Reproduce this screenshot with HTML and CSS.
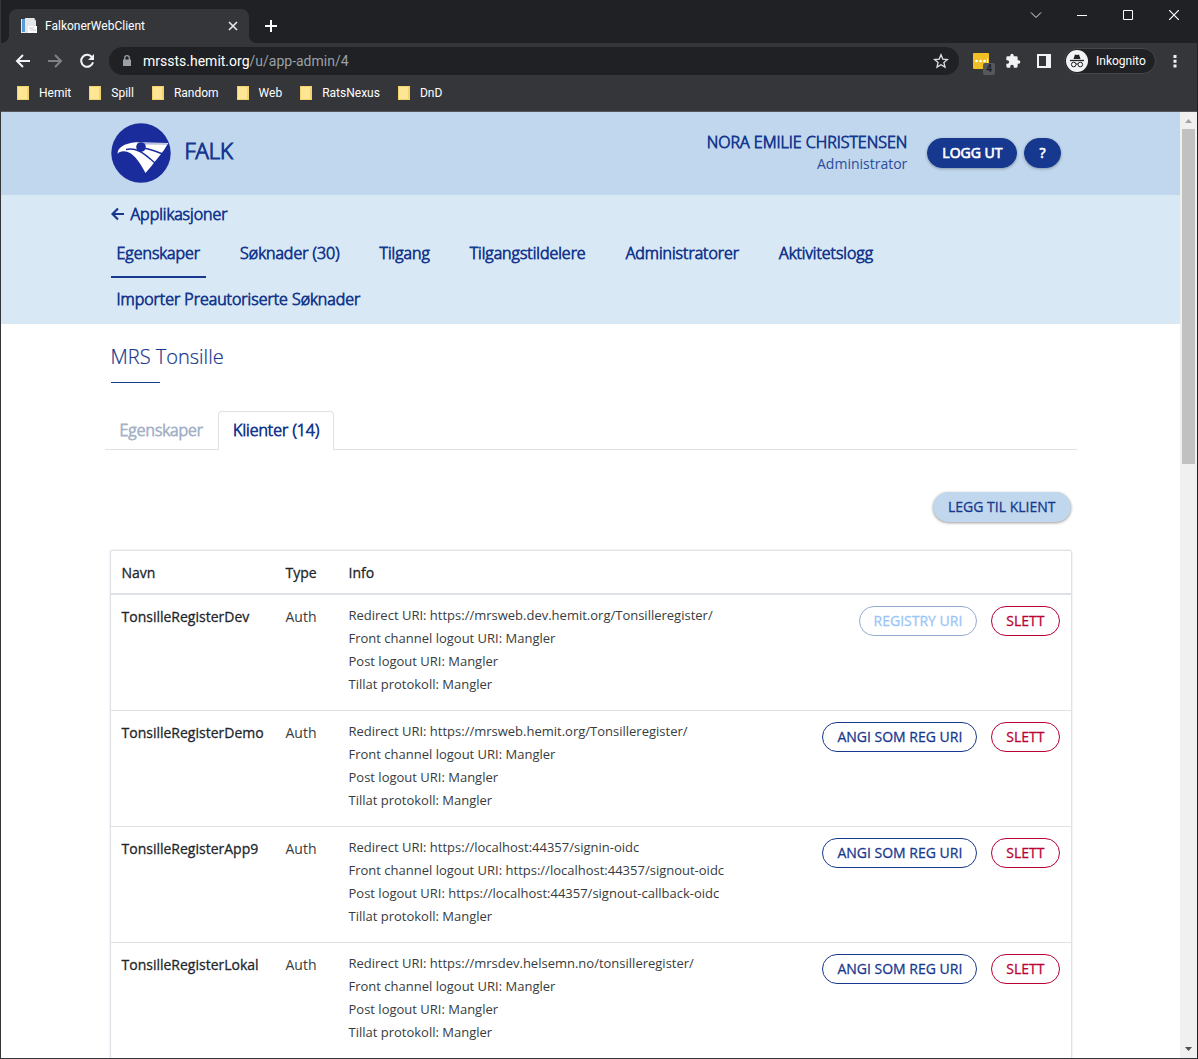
FILE: index.html
```html
<!DOCTYPE html>
<html lang="no">
<head>
<meta charset="utf-8">
<meta name="viewport" content="width=device-width, initial-scale=1">
<title>FalkonerWebClient</title>
<link rel="stylesheet" href="styles.css">
</head>
<body>
<div class="window">
  <div class="tabstrip">
    <div class="browser-tab">
      <svg class="favicon" width="16" height="16" viewBox="0 0 16 16"><path d="M0 1h10v14H0z" fill="#e8eaed"/><path d="M1 1h3v13H1z" fill="#5b9bd5"/><path d="M4 0h9l2 3v12H4z" fill="#e3e7ec"/><path d="M7 8h9v7H7z" fill="#fff"/><path d="M8 10h5M9 12h6" stroke="#c4c8cf"/><path d="M13 0v3h2" fill="#c5cdd8"/></svg>
      <span class="browser-tab-title">FalkonerWebClient</span>
      <button class="icon-button tab-close" aria-label="Lukk fane"><svg width="10" height="10" viewBox="0 0 10 10"><path d="M1 1l8 8M9 1L1 9" stroke="#e8eaed" stroke-width="1.6"/></svg></button>
    </div>
    <button class="icon-button new-tab" aria-label="Ny fane"><svg width="12" height="12" viewBox="0 0 12 12"><path d="M6 0v12M0 6h12" stroke="#fff" stroke-width="2"/></svg></button>
    <div class="window-buttons">
      <button class="icon-button" aria-label="Søk i faner"><svg width="12" height="12" viewBox="0 0 12 12"><path d="M1 3.500l5 5 5-5" fill="none" stroke="#e8eaed"/></svg></button>
      <button class="icon-button" aria-label="Minimer"><svg width="10" height="12" viewBox="0 0 10 12"><path d="M0 6.500h10" stroke="#fff"/></svg></button>
      <button class="icon-button" aria-label="Maksimer"><svg width="10" height="10" viewBox="0 0 10 10"><path d="M.5.5h9v9h-9z" fill="none" stroke="#fff"/></svg></button>
      <button class="icon-button" aria-label="Lukk"><svg width="10" height="10" viewBox="0 0 10 10"><path d="M0 0l10 10M10 0L0 10" stroke="#fff" stroke-width="1.2"/></svg></button>
    </div>
  </div>

  <div class="toolbar">
    <div class="nav-buttons">
      <button class="icon-button" aria-label="Tilbake"><svg width="16" height="16" viewBox="0 0 16 16"><path d="M15 8H2M8 2L2 8l6 6" fill="none" stroke="#f1f3f4" stroke-width="2"/></svg></button>
      <button class="icon-button" aria-label="Frem"><svg width="16" height="16" viewBox="0 0 16 16"><path d="M1 8h13M8 2l6 6-6 6" fill="none" stroke="#7e8185" stroke-width="2"/></svg></button>
      <button class="icon-button" aria-label="Last inn på nytt"><svg width="16" height="16" viewBox="0 0 16 16"><path d="M13.200 4.500A6 6 0 1 0 14 9.200" fill="none" stroke="#f1f3f4" stroke-width="2"/><path d="M15 1v6H9z" fill="#f1f3f4"/></svg></button>
    </div>
    <div class="omnibox">
      <svg width="8" height="12" viewBox="0 0 8 12"><path d="M0 4.500h8V11H0z" fill="#9aa0a6"/><path d="M1.700 5V3a2.300 2.300 0 0 1 4.600 0v2" fill="none" stroke="#9aa0a6" stroke-width="1.300"/></svg>
      <div class="url"><span class="url-host">mrssts.hemit.org</span>/u/app-admin/4</div>
      <button class="icon-button" aria-label="Legg til bokmerke"><svg width="16" height="16" viewBox="0 0 16 16"><path d="M8 1.800l1.800 4.300 4.700.4-3.600 3 1.100 4.600L8 11.700l-4 2.400 1.100-4.600-3.600-3 4.700-.4z" fill="none" stroke="#dfe1e5" stroke-width="1.300"/></svg></button>
    </div>
    <div class="extensions">
      <button class="icon-button extension" aria-label="Utvidelse"><svg width="22" height="22" viewBox="0 0 22 22"><rect width="16" height="16" rx="1" fill="#f0c024"/><circle cx="3.500" cy="8" r="1.300" fill="#fff"/><circle cx="7.500" cy="8" r="1.300" fill="#fff"/><circle cx="11.500" cy="8" r="1.300" fill="#fff"/><path d="M14.500 5.500v5" stroke="#fff"/></svg><span class="extension-badge">4</span></button>
      <button class="icon-button" aria-label="Utvidelser"><svg width="16" height="16" viewBox="0 0 24 24"><path d="M20.500 11H19V7a2 2 0 0 0-2-2h-4V3.500a2.500 2.500 0 0 0-5 0V5H4a2 2 0 0 0-2 2v3.800h1.500a2.700 2.700 0 0 1 0 5.400H2V20a2 2 0 0 0 2 2h3.800v-1.500a2.700 2.700 0 0 1 5.400 0V22H17a2 2 0 0 0 2-2v-4h1.500a2.500 2.500 0 0 0 0-5z" fill="#f1f3f4"/></svg></button>
      <button class="icon-button" aria-label="Sidepanel"><svg width="14" height="14" viewBox="0 0 14 14"><path d="M0 0h14v14H0zM2 2v10h7V2z" fill="#f1f3f4" fill-rule="evenodd"/></svg></button>
    </div>
    <button class="profile"><svg width="22" height="22" viewBox="0 0 22 22"><circle cx="11" cy="11" r="11" fill="#f1f3f4"/><path d="M7.500 9L9 4.500l2 .6 2-.6L14.500 9z" fill="#202124"/><path d="M4 10.500h14" stroke="#202124" stroke-width="1.300"/><circle cx="7.700" cy="14.500" r="2.300" fill="none" stroke="#202124"/><circle cx="14.300" cy="14.500" r="2.300" fill="none" stroke="#202124"/><path d="M10 14.200q1-.8 2 0" fill="none" stroke="#202124"/></svg>Inkognito</button>
    <button class="icon-button menu" aria-label="Meny"><svg width="4" height="14" viewBox="0 0 4 14"><path d="M.5 1h3v3h-3zM.5 5.800h3v3h-3zM.5 10.600h3v3h-3z" fill="#f1f3f4"/></svg></button>
  </div>

  <nav class="bookmarks" aria-label="Bokmerker">
    <a href="#"><i class="folder"></i>Hemit</a>
    <a href="#"><i class="folder"></i>Spill</a>
    <a href="#"><i class="folder"></i>Random</a>
    <a href="#"><i class="folder"></i>Web</a>
    <a href="#"><i class="folder"></i>RatsNexus</a>
    <a href="#"><i class="folder"></i>DnD</a>
  </nav>

  <div class="viewport">
    <div class="page">
      <header class="site-header">
        <div class="container header-row">
          <svg class="logo" width="60" height="60" viewBox="0 0 60 60"><circle cx="30" cy="30" r="29.700" fill="#1a2c9b"/><path d="M6.700 31C6 25 13 20.300 25 19.300L57.300 20 53 27l-3 4-6 7.500-3.500 4.500-6 7C31 44 29 40 26 36.500 22 31 17 28.500 13 28.300c-3.500 0-5.500 1-6.300 2.700z" fill="#fff"/><path d="M15 26.500c4-.8 9-.5 13 1.500 6 2.800 10 7 16.500 12.500" fill="none" stroke="#1a2c9b" stroke-width="1.400"/><path d="M33 25.300c7 1 12 3.200 19 5.700" fill="none" stroke="#1a2c9b" stroke-width="1.600"/><circle cx="30" cy="24" r="4.800" fill="#1a2c9b"/><path d="M27 20.800l29 .2" stroke="#1a2c9b" stroke-width=".5"/></svg>
          <span class="brand">FALK</span>
          <div class="user"><span class="user-name">NORA EMILIE CHRISTENSEN</span><span class="user-role">Administrator</span></div>
          <div class="header-actions">
            <button class="button button-primary">LOGG UT</button>
            <button class="button button-primary" aria-label="Hjelp">?</button>
          </div>
        </div>
      </header>
      <div class="sub-header">
        <div class="container">
          <a class="back-link" href="#"><svg width="14" height="14" viewBox="0 0 14 14"><path d="M13 7H2M7 1.500L1.500 7 7 12.500" fill="none" stroke="#16388e" stroke-width="2.200"/></svg>Applikasjoner</a>
          <nav class="main-nav">
            <a class="active" href="#">Egenskaper</a>
            <a href="#">Søknader (30)</a>
            <a href="#">Tilgang</a>
            <a href="#">Tilgangstildelere</a>
            <a href="#">Administratorer</a>
            <a href="#">Aktivitetslogg</a>
            <a href="#">Importer Preautoriserte Søknader</a>
          </nav>
        </div>
      </div>
      <main class="container content">
        <h1>MRS Tonsille</h1>
        <div class="tabs">
          <a href="#">Egenskaper</a>
          <a class="active" href="#">Klienter (14)</a>
        </div>
        <div class="table-actions"><button class="button button-light">LEGG TIL KLIENT</button></div>
        <table class="clients">
          <thead>
            <tr><th class="col-name">Navn</th><th class="col-type">Type</th><th>Info</th><td class="col-actions"></td></tr>
          </thead>
          <tbody>
            <tr>
              <th>TonsilleRegisterDev</th><td>Auth</td>
              <td class="info">Redirect URI: https://mrsweb.dev.hemit.org/Tonsilleregister/<br>Front channel logout URI: Mangler<br>Post logout URI: Mangler<br>Tillat protokoll: Mangler</td>
              <td class="actions"><button class="button button-outline" disabled>REGISTRY URI</button><button class="button button-danger">SLETT</button></td>
            </tr>
            <tr>
              <th>TonsilleRegisterDemo</th><td>Auth</td>
              <td class="info">Redirect URI: https://mrsweb.hemit.org/Tonsilleregister/<br>Front channel logout URI: Mangler<br>Post logout URI: Mangler<br>Tillat protokoll: Mangler</td>
              <td class="actions"><button class="button button-outline">ANGI SOM REG URI</button><button class="button button-danger">SLETT</button></td>
            </tr>
            <tr>
              <th>TonsilleRegisterApp9</th><td>Auth</td>
              <td class="info">Redirect URI: https://localhost:44357/signin-oidc<br>Front channel logout URI: https://localhost:44357/signout-oidc<br>Post logout URI: https://localhost:44357/signout-callback-oidc<br>Tillat protokoll: Mangler</td>
              <td class="actions"><button class="button button-outline">ANGI SOM REG URI</button><button class="button button-danger">SLETT</button></td>
            </tr>
            <tr>
              <th>TonsilleRegisterLokal</th><td>Auth</td>
              <td class="info">Redirect URI: https://mrsdev.helsemn.no/tonsilleregister/<br>Front channel logout URI: Mangler<br>Post logout URI: Mangler<br>Tillat protokoll: Mangler</td>
              <td class="actions"><button class="button button-outline">ANGI SOM REG URI</button><button class="button button-danger">SLETT</button></td>
            </tr>
          </tbody>
        </table>
      </main>
    </div>
    <div class="scrollbar" aria-hidden="true">
      <svg width="17" height="17" viewBox="0 0 17 17"><path d="M5 11l3.500-4 3.500 4z" fill="#a3a3a3"/></svg>
      <div class="track"><div class="thumb"></div></div>
      <svg width="17" height="17" viewBox="0 0 17 17"><path d="M5 6l3.500 4L12 6z" fill="#505050"/></svg>
    </div>
  </div>
</div>
</body>
</html>
```

FILE: styles.css
```css
* { box-sizing: border-box; }

body {
  margin: 0;
  color: #212529;
  font: 400 14px/20px "Open Sans", sans-serif;
}

a { color: inherit; text-decoration: none; }
button { font: inherit; }
svg { display: block; flex: none; }

.window {
  display: flex;
  flex-direction: column;
  height: 100vh;
  padding: 0 0 1px 1px;
  border-right: 1px solid #202124;
  background: #35363a;
}

.icon-button {
  display: flex;
  align-items: center;
  justify-content: center;
  padding: 0;
  border: 0;
  background: none;
}

.tabstrip, .toolbar, .bookmarks { font-family: Roboto, sans-serif; }

/* Tab strip */
.tabstrip {
  display: flex;
  height: 43px;
  padding-left: 8px;
  background: #202124;
}

.browser-tab {
  position: relative;
  display: flex;
  align-items: center;
  gap: 8px;
  width: 240px;
  margin-top: 9px;
  padding: 0 11px 0 12px;
  border-radius: 8px 8px 0 0;
  background: #35363a;
  color: #fff;
  font-size: 12px;
}

.browser-tab::before,
.browser-tab::after {
  content: "";
  position: absolute;
  bottom: 0;
  width: 8px;
  height: 8px;
}

.browser-tab::before {
  left: -8px;
  background: radial-gradient(circle at 0 0, #202124 8px, #35363a 8px);
}

.browser-tab::after {
  right: -8px;
  background: radial-gradient(circle at 100% 0, #202124 8px, #35363a 8px);
}

.browser-tab-title { flex: 1; }
.new-tab { width: 44px; padding-top: 9px; }
.window-buttons { display: flex; height: 30px; margin-left: auto; }
.window-buttons .icon-button { width: 46px; }

/* Address bar */
.toolbar {
  display: flex;
  align-items: center;
  height: 36px;
  color: #fff;
}

.nav-buttons { display: flex; gap: 16px; padding: 0 14px; }

.omnibox {
  display: flex;
  flex: 1;
  align-items: center;
  gap: 12px;
  height: 28px;
  padding: 0 10px 0 14px;
  border-radius: 14px;
  background: #202124;
}

.url { flex: 1; color: #9aa0a6; font-size: 14px; }
.url-host { color: #fff; }

.extensions { display: flex; align-items: center; gap: 16px; padding: 0 13px 0 14px; }
.extension { position: relative; height: 22px; padding-top: 6px; margin-right: -6px; }

.extension-badge {
  position: absolute;
  right: 0;
  bottom: -3px;
  width: 12px;
  height: 12px;
  border-radius: 2px;
  background: #55585c;
  color: #202124;
  font-size: 10px;
  font-weight: 600;
  line-height: 12px;
}

.profile {
  display: flex;
  align-items: center;
  gap: 8px;
  width: 92px;
  height: 26px;
  padding: 0 0 0 1px;
  border: 1px solid #46474b;
  border-radius: 13px;
  background: #202124;
  color: #fff;
  font-size: 12px;
}

.menu { width: 41px; padding-right: 4px; }

/* Bookmarks */
.bookmarks {
  display: flex;
  align-items: center;
  gap: 18px;
  height: 33px;
  padding: 0 16px 5px;
  border-bottom: 1px solid #55575b;
  color: #fff;
  font-size: 12px;
}

.bookmarks a { display: flex; align-items: center; gap: 10px; }

.folder {
  width: 12px;
  height: 14px;
  border: 1px solid #f3d36b;
  border-right-width: 2px;
  background: #ffe694;
}

/* Web page */
.viewport { display: flex; flex: 1; min-height: 0; }
.page { flex: 1; overflow: hidden; background: #fff; }

.container { max-width: 972px; margin: 0 auto; padding: 0 6px; }

/* Light face thickened with an outline */
.brand, .user-name, .back-link, .main-nav, .tabs {
  font-weight: 300;
  -webkit-text-stroke: .05em;
}

.site-header { padding: 11px 0 12px; background: #c0d7ed; color: #16388e; }
.header-row { display: flex; align-items: center; padding-right: 16px; }
.brand { margin: 0 auto 6px 14px; font-size: 22px; line-height: 30px; }

.user { display: flex; flex-direction: column; align-items: flex-end; margin-right: 20px; line-height: 22px; }
.user-name { font-size: 16px; }
.user-role { color: #2b4c9c; }
.header-actions { display: flex; gap: 7px; }

.button {
  height: 30px;
  padding: 0 14px;
  border: 1px solid;
  border-radius: 15px;
  font-size: 14px;
  line-height: 28px;
  white-space: nowrap;
  -webkit-text-stroke: .02em;
}

.button-primary {
  border-color: #16388e;
  background: #16388e;
  color: #fff;
  box-shadow: 0 1px 3px rgba(0, 0, 0, .3);
  -webkit-text-stroke: .05em;
}

.button-light {
  border-color: #c0d7ed;
  background: #c0d7ed;
  color: #16388e;
  box-shadow: 0 1px 3px rgba(0, 0, 0, .4);
}

.button-outline { border-color: #16388e; background: #fff; color: #16388e; }
.button-outline:disabled { border-color: #96abd0; color: #99c5f8; }
.button-danger { border-color: #b90035; background: #fff; color: #b90035; }

.sub-header { background: #d9e8f5; color: #16388e; font-size: 16px; }
.back-link { display: flex; align-items: center; gap: 6px; height: 37px; }

.main-nav { display: flex; flex-wrap: wrap; column-gap: 28px; }
.main-nav a { height: 46px; padding: 0 6px; border-bottom: 2px solid transparent; line-height: 42px; }
.main-nav .active { border-color: #16388e; }

.content { padding: 20px 0 0; }

h1 {
  margin: 0 6px 28px;
  color: #16388e;
  font-size: 20px;
  font-weight: 300;
  line-height: 26px;
  -webkit-text-stroke: .01em;
}

h1::after {
  content: "";
  display: block;
  width: 49px;
  margin-top: 12px;
  border-bottom: 1px solid #16388e;
}

.tabs {
  display: flex;
  border-bottom: 1px solid #dee2e6;
  font-size: 16px;
}

.tabs a {
  margin-bottom: -1px;
  padding: 0 14px;
  border: 1px solid transparent;
  color: #a4b1c6;
  line-height: 37px;
}

.tabs .active {
  border-color: #dee2e6 #dee2e6 #fff;
  border-radius: 4px 4px 0 0;
  background: #fff;
  color: #16388e;
}

.table-actions { display: flex; justify-content: flex-end; padding: 42px 6px 28px; }

.clients {
  width: calc(100% - 10px);
  margin: 0 5px;
  border: 1px solid #dee2e6;
  border-radius: 2px;
  border-spacing: 0;
  box-shadow: 0 0 2px rgba(0, 0, 0, .15);
  table-layout: fixed;
}

.clients th, .clients td { padding: 12px 0 10px 11px; text-align: left; vertical-align: top; }
.clients td { color: #383c40; }
.clients th { font-weight: 400; -webkit-text-stroke: .02em; }
.clients thead th, .clients thead td { border-bottom: 2px solid #dee2e6; }
.clients tbody tr + tr > * { border-top: 1px solid #dee2e6; }
.clients tbody .info { padding: 9px 0 14px 11px; font-size: 13px; line-height: 23px; }
.clients tbody .actions { padding: 11px; text-align: right; }
.actions .button + .button { margin-left: 14px; }
.col-name { width: 164px; }
.col-type { width: 63px; }
.col-actions { width: 270px; }

/* Scroll bar */
.scrollbar { display: flex; flex-direction: column; width: 17px; background: #f0f0f0; }
.track { flex: 1; padding: 0 2px; }
.thumb { height: 36.7%; background: #c1c1c1; }
```
